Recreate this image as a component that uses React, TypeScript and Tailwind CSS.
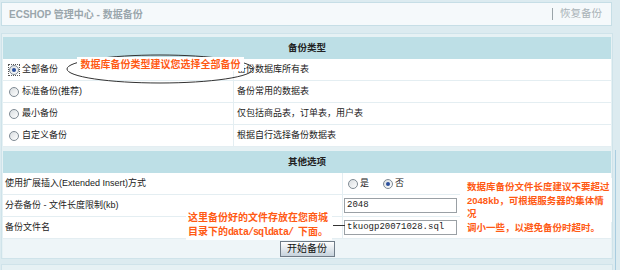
import React from "react";

const cjk = "font-['Liberation_Sans','Noto_Sans_CJK_SC',sans-serif]";

function Radio({ checked, focus }: { checked?: boolean; focus?: boolean }) {
  return (
    <span
      className={`inline-flex h-[12px] w-[12px] shrink-0 items-center justify-center ${
        focus ? "border border-dotted border-[#555]" : ""
      }`}
    >
      <span className="flex h-[10px] w-[10px] items-center justify-center rounded-full border border-[#7f8a93] bg-gradient-to-br from-[#d9dde0] to-white">
        {checked && <span className="h-[4px] w-[4px] rounded-full bg-[#2a4f9c]" />}
      </span>
    </span>
  );
}

const backupTypes = [
  { label: "全部备份", desc: "备份数据库所有表", checked: true },
  { label: "标准备份(推荐)", desc: "备份常用的数据表" },
  { label: "最小备份", desc: "仅包括商品表，订单表，用户表" },
  { label: "自定义备份", desc: "根据自行选择备份数据表" },
];

function Band({ title }: { title: string }) {
  return (
    <div className="flex h-[22px] items-center justify-center bg-[#bddfe6] text-[9.5px] font-bold text-[#222]">
      {title}
    </div>
  );
}

export default function App() {
  return (
    <div className={`relative h-[270px] w-[620px] overflow-hidden bg-[#dcebf0] pt-[2px] ${cjk}`}>
      {/* page title bar */}
      <div className="ml-[1px] flex h-[24px] w-[611px] items-center justify-between border border-[#c6dee6] bg-[#f5f9fb] pl-[7px] pr-[9px]">
        <span className="text-[10px] font-bold text-[#9aa6ac]">ECSHOP 管理中心 - 数据备份</span>
        <span className="flex items-center gap-[7px] text-[10.5px] text-[#a9b2b7]">
          <span className="h-[12px] w-[1px] bg-[#9aa4a9]" />
          恢复备份
        </span>
      </div>

      {/* main panel */}
      <div className="ml-[1px] mt-[7px] w-[612px] border border-[#cfe3ea] bg-[#e6f1f4] px-[1px] pt-[3px]">
        <Band title="备份类型" />
        {backupTypes.map((t) => (
          <div key={t.label} className="flex h-[22px] border-b border-[#e4eef2] bg-white text-[9px] text-[#222]">
            <div className="flex w-[231px] items-center gap-[2px] border-r border-[#e4eef2] pl-[5px]">
              <Radio checked={t.checked} focus={t.checked} />
              <span>{t.label}</span>
            </div>
            <div className="flex flex-1 items-center pl-[3px]">{t.desc}</div>
          </div>
        ))}

        <div className="mt-[4px]">
          <Band title="其他选项" />
        </div>
        <div className="flex h-[22px] border-b border-[#e4eef2] bg-white text-[9px] text-[#222]">
          <div className="flex w-[340px] items-center border-r border-[#e4eef2] pl-[2px]">
            使用扩展插入(Extended Insert)方式
          </div>
          <div className="flex flex-1 items-center pl-[4px]">
            <Radio />
            <span className="ml-[1px]">是</span>
            <span className="ml-[13px]" />
            <Radio checked />
            <span className="ml-[1px]">否</span>
          </div>
        </div>
        <div className="flex h-[22px] border-b border-[#e4eef2] bg-white text-[9px] text-[#222]">
          <div className="flex w-[340px] items-center border-r border-[#e4eef2] pl-[2px]">
            分卷备份 - 文件长度限制(kb)
          </div>
          <div className="flex flex-1 items-center pl-[1px]">
            <div className="flex h-[15px] w-[113px] items-center border border-[#9aa0a5] bg-white pl-[2px] font-['Liberation_Mono',monospace] text-[9px]">
              2048
            </div>
          </div>
        </div>
        <div className="flex h-[22px] border-b border-[#e4eef2] bg-white text-[9px] text-[#222]">
          <div className="flex w-[340px] items-center border-r border-[#e4eef2] pl-[2px]">备份文件名</div>
          <div className="flex flex-1 items-center pl-[1px]">
            <div className="flex h-[15px] w-[113px] items-center border border-[#9aa0a5] bg-white pl-[2px] font-['Liberation_Mono',monospace] text-[9px]">
              tkuogp20071028.sql
            </div>
          </div>
        </div>
        <div className="flex h-[19px] items-center justify-center bg-[#eef5f8]">
          <button className="flex h-[16px] w-[55px] items-center justify-center border border-[#6f7c88] bg-gradient-to-b from-white to-[#c6d2dc] text-[10px] text-[#111]">
            开始备份
          </button>
        </div>
      </div>
      <div className="ml-[1px] mt-[5px] h-[10px] w-[612px] border border-[#cfe3ea] bg-[#e6f1f4]" />
      <div className="absolute right-[4px] top-[150px] h-[120px] w-[1px] bg-[#a9cde0]" />

      {/* annotation: ellipse */}
      <svg className="absolute left-[64px] top-[52px]" width="192" height="34" viewBox="0 0 192 34">
        <ellipse cx="96" cy="17" rx="93" ry="14" fill="none" stroke="#333" strokeWidth="1" />
      </svg>
      <div className="absolute left-[77px] top-[57px] flex h-[14px] w-[167px] items-center justify-center bg-white text-[10px] font-bold text-[#ff5a14]">
        数据库备份类型建议您选择全部备份
      </div>

      {/* annotation: file path */}
      <div className="absolute left-[186px] top-[209px] h-[31px] w-[146px] bg-white pl-[2px] pt-[2px] text-[10px] font-bold leading-[14px] text-[#ff5a14]">
        <div>这里备份好的文件存放在您商城</div>
        <div>
          目录下的
          <span className="font-['Liberation_Mono',monospace] tracking-[-1px]">data/sqldata/ </span>
          下面。
        </div>
      </div>
      <div className="absolute left-[333px] top-[225px] h-[1px] w-[12px] bg-[#333]" />

      {/* annotation: size limit */}
      <div className="absolute left-[460px] top-[178px] h-[44px] w-[152px] bg-white pl-[7px] pt-[2px] text-[9.5px] font-bold leading-[13.5px] text-[#ff5a14]">
        <div>数据库备份文件长度建议不要超过</div>
        <div>2048kb，可根据服务器的集体情况</div>
        <div>调小一些，以避免备份时超时。</div>
      </div>
    </div>
  );
}
